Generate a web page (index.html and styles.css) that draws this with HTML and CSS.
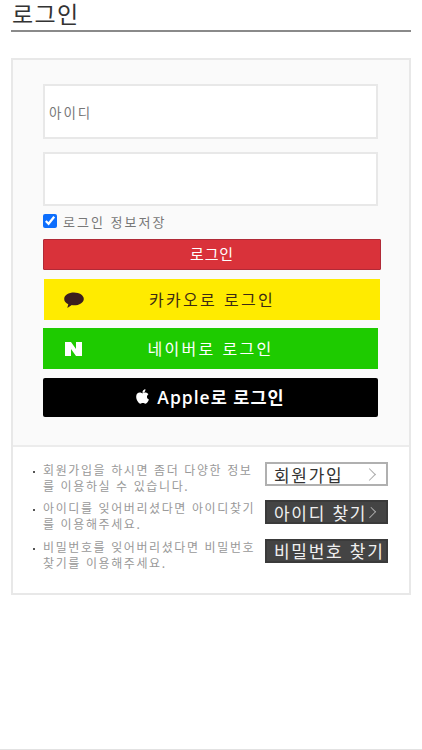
FILE: index.html
```html
<!DOCTYPE html>
<html lang="ko">
<head>
	<meta charset="utf-8">
	<title>로그인</title>
	<link rel="stylesheet" href="styles.css">
</head>
<body>

<div class="page">
	<h1 class="title">로그인</h1>

	<div class="login-box">
		<form class="login-form">
			<input class="field" type="text" placeholder="아이디">
			<input class="field field-pw" type="password">
			<label class="remember">
				<input type="checkbox" checked>
				<span>로그인 정보저장</span>
			</label>
			<button class="btn-login" type="button">로그인</button>

			<a class="social kakao">
				<svg class="social-icon" width="20" height="16" viewBox="0 0 20 16">
					<path fill="#3c1e1e" d="M10 0.5C4.7 0.5 0.2 3.2 0.2 6.9c0 2.3 1.6 4.2 4.1 5.3l-0.9 3.4c-0.1 0.2 0.1 0.3 0.3 0.2l4.1-2.7c0.7 0.1 1.4 0.2 2.2 0.2 5.3 0 9.8-2.8 9.8-6.4S15.3 0.5 10 0.5z"/>
				</svg>
				<span>카카오로 로그인</span>
			</a>
			<a class="social naver">
				<svg class="social-icon" width="17" height="14" viewBox="0 0 17 14">
					<path fill="#fff" d="M0 0h6l5 7V0h6v14h-6L6 7v7H0z"/>
				</svg>
				<span>네이버로 로그인</span>
			</a>
			<a class="social apple">
				<svg width="13" height="15" viewBox="0 0 14 16">
					<path fill="#fff" d="M10.2 0.2c0.1 1-0.3 1.9-0.8 2.6-0.6 0.7-1.5 1.2-2.4 1.1-0.1-0.9 0.3-1.9 0.8-2.5C8.4 0.7 9.4 0.2 10.2 0.2zM13.4 5.5c-1 0.7-1.6 1.6-1.6 2.8 0 1.4 0.8 2.4 2.1 3-0.3 0.9-0.7 1.7-1.2 2.4-0.7 1-1.5 2-2.6 2-1.1 0-1.4-0.7-2.7-0.7-1.3 0-1.7 0.7-2.7 0.7-1.1 0-1.9-1-2.6-2C1.1 12.400 0.200 10.200 0.200 8.200c0-3 1.900-4.500 3.800-4.500 1.100 0 2 0.700 2.700 0.700 0.700 0 1.700-0.800 3-0.800 1.500 0 2.900 0.700 3.700 1.900z"/>
				</svg>
				<span>Apple로 로그인</span>
			</a>
		</form>

		<div class="help">
			<div class="help-row">
				<p class="help-text">회원가입을 하시면 좀더 다양한 정보를 이용하실 수 있습니다.</p>
				<a class="help-btn light"><span>회원가입</span><i class="arrow"></i></a>
			</div>
			<div class="help-row">
				<p class="help-text">아이디를 잊어버리셨다면 아이디찾기를 이용해주세요.</p>
				<a class="help-btn dark"><span>아이디 찾기</span><i class="arrow"></i></a>
			</div>
			<div class="help-row">
				<p class="help-text">비밀번호를 잊어버리셨다면 비밀번호 찾기를 이용해주세요.</p>
				<a class="help-btn dark"><span>비밀번호 찾기</span></a>
			</div>
		</div>
	</div>
</div>

<div class="bottom-line"></div>

</body>
</html>
```

FILE: styles.css
```css
* {
	box-sizing: border-box;
}

html, body {
	margin: 0;
	height: 100%;
}

body {
	display: flex;
	flex-direction: column;
	background: #fff;
	color: #333;
	font-family: "Noto Sans CJK KR", "Noto Sans", sans-serif;
}

.page {
	flex: 1;
	padding: 0 11px;
}

.title {
	height: 32px;
	margin: 0;
	padding-left: 1px;
	border-bottom: 2px solid #8a8a8a;
	font-family: "Liberation Sans", "Noto Sans CJK KR", sans-serif;
	font-size: 23px;
	font-weight: 400;
	line-height: 30px;
	letter-spacing: 1.300px;
	color: #333;
}

.login-box {
	margin-top: 26px;
	height: 537px;
	border: 2px solid #e8e8e8;
}

.login-form {
	height: 387px;
	padding: 24px 0 0 30px;
	background: #fafafa;
	border-bottom: 2px solid #ececec;
}

.field {
	display: block;
	width: 335px;
	height: 55px;
	padding: 0 4px;
	border: 2px solid #e8e8e8;
	background: #fff;
	font-family: inherit;
	font-size: 13.500px;
	letter-spacing: 2px;
}

.field::placeholder {
	color: #777;
	opacity: 1;
}

.field-pw {
	height: 54px;
	margin-top: 13px;
}

.remember {
	display: flex;
	align-items: center;
	height: 24px;
	margin-top: 3px;
	font-size: 13px;
	letter-spacing: 2px;
	color: #777;
}

.remember input {
	width: 14px;
	height: 14px;
	margin: 0 6px 0 0;
	accent-color: #0d6efd;
}

.btn-login {
	display: block;
	width: 338px;
	height: 31px;
	margin-top: 6px;
	padding: 0 0 3px;
	border: 1px solid #b02a37;
	border-radius: 1px;
	background: #d9323a;
	color: #fff;
	font-family: inherit;
	font-size: 15px;
	letter-spacing: 0.8px;
}

.social {
	position: relative;
	display: flex;
	align-items: center;
	justify-content: center;
	width: 335px;
	height: 41px;
	margin-top: 8px;
	padding-bottom: 2px;
	font-size: 16px;
	letter-spacing: 2.300px;
}

.social-icon {
	position: absolute;
	left: 20px;
	top: 13px;
}

.kakao {
	width: 336px;
	margin-top: 9px;
	margin-left: 1px;
	background: #ffeb00;
	color: #3c2a14;
}

.naver {
	background: #1ecb00;
	color: #fff;
}

.naver .social-icon {
	left: 22px;
	top: 14px;
}

.apple {
	height: 39px;
	margin-top: 9px;
	border-radius: 2px;
	background: #000;
	color: #fff;
	font-family: "Open Sans", "Noto Sans CJK KR", sans-serif;
	font-size: 17.500px;
	font-weight: 600;
	letter-spacing: 1px;
	gap: 8px;
}

.help {
	padding: 15px 21px 0 18px;
	background: #fff;
}

.help-row {
	display: flex;
	justify-content: space-between;
	align-items: flex-start;
	height: 38.300px;
}

.help-text {
	position: relative;
	width: 226px;
	margin: 0;
	padding-left: 12px;
	font-size: 12px;
	line-height: 16px;
	letter-spacing: 1.600px;
	color: #999;
	word-break: break-all;
}

.help-text::before {
	content: "";
	position: absolute;
	left: 2px;
	top: 9px;
	width: 2px;
	height: 2px;
	background: #555;
}

.help-btn {
	display: flex;
	align-items: center;
	flex: none;
	width: 123px;
	height: 24px;
	padding-left: 7px;
	font-size: 17px;
	letter-spacing: 1.700px;
	white-space: nowrap;
}

.light {
	border: 2px solid #b0b0b0;
	background: #fff;
	color: #333;
}

.dark {
	border: 2px solid #3a3a3a;
	background: #444;
	color: #f0f0f0;
}

.arrow {
	width: 9px;
	height: 9px;
	margin-left: auto;
	margin-right: 12px;
	border-top: 1px solid #aaa;
	border-right: 1px solid #aaa;
	transform: rotate(45deg);
}

.bottom-line {
	height: 1px;
	background: #e2e2e2;
}
```
